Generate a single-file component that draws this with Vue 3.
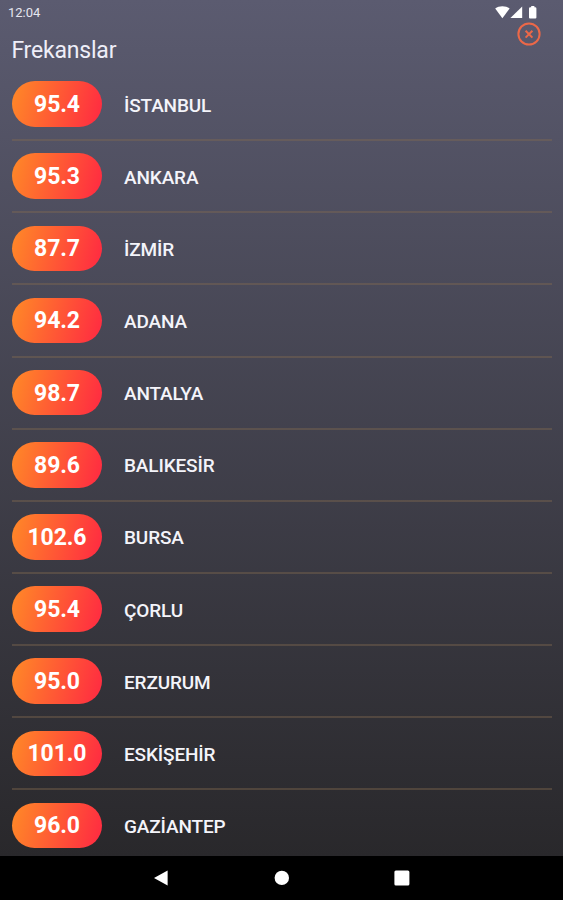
<!-- Frequencies.vue -->
<template>
  <div class="screen">
    <div class="status-bar">
      <span class="clock">12:04</span>
      <svg class="status-icons" viewBox="0 0 43 14" width="43" height="14">
        <!-- wifi -->
        <path d="M0.2 2.6 C4 -0.6 10.8 -0.6 14.6 2.6 L7.4 12.2 Z" />
        <!-- signal -->
        <path d="M27.2 0.4 V12 H15.4 Z" />
        <!-- battery -->
        <path d="M35.3 1.2 H36.2 V0 H39.4 V1.2 H40.2 Q41.4 1.2 41.4 2.4 V11.4 Q41.4 12.4 40.4 12.4 H35 Q34 12.4 34 11.4 V2.4 Q34 1.2 35.3 1.2 Z" />
      </svg>
    </div>

    <header class="header">
      <h1 class="title">Frekanslar</h1>
      <button class="close-button" aria-label="Kapat">
        <svg viewBox="0 0 24 24" width="24" height="24">
          <circle cx="12" cy="12" r="10.6" />
          <path d="M8.6 8.8 L15.4 15.6 M15.4 8.8 L8.6 15.6" />
        </svg>
      </button>
    </header>

    <ul class="station-list">
      <li v-for="station in stations" :key="station.city" class="station">
        <span class="frequency">{{ station.frequency }}</span>
        <span class="city">{{ station.city }}</span>
      </li>
    </ul>

    <nav class="nav-bar">
      <svg viewBox="0 0 16 16" width="16" height="16">
        <path d="M0 8 L13.6 0.4 V15.6 Z" />
      </svg>
      <svg viewBox="0 0 16 16" width="16" height="16">
        <circle cx="7.8" cy="7.9" r="7.2" />
      </svg>
      <svg viewBox="0 0 16 16" width="16" height="16">
        <rect x="0.4" y="0.4" width="15" height="15.2" rx="1.5" />
      </svg>
    </nav>
  </div>
</template>

<script setup>
const stations = [
  { frequency: '95.4', city: 'İSTANBUL' },
  { frequency: '95.3', city: 'ANKARA' },
  { frequency: '87.7', city: 'İZMİR' },
  { frequency: '94.2', city: 'ADANA' },
  { frequency: '98.7', city: 'ANTALYA' },
  { frequency: '89.6', city: 'BALIKESİR' },
  { frequency: '102.6', city: 'BURSA' },
  { frequency: '95.4', city: 'ÇORLU' },
  { frequency: '95.0', city: 'ERZURUM' },
  { frequency: '101.0', city: 'ESKİŞEHİR' },
  { frequency: '96.0', city: 'GAZİANTEP' }
]
</script>

<style>
body {
  margin: 0;
  background: #000;
}
</style>

<style scoped>
.screen {
  display: flex;
  flex-direction: column;
  height: 900px;
  overflow: hidden;
  box-sizing: border-box;
  background: linear-gradient(180deg, #5b5b70 0, #29282b 856px);
  color: #f4f4fa;
  font-family: Roboto, 'Liberation Sans', sans-serif;
}

.status-bar {
  display: flex;
  justify-content: space-between;
  align-items: center;
  flex: none;
  height: 25px;
  padding: 0 25px 0 8px;
}

.clock {
  font-size: 13px;
  color: #e6e6ef;
}

.status-icons {
  fill: #fff;
}

.header {
  display: flex;
  justify-content: space-between;
  align-items: flex-start;
  flex: none;
  height: 44px;
  padding: 0 22px 0 11px;
}

.title {
  margin: 12px 0 0 0.4px;
  font-size: 23px;
  letter-spacing: -0.2px;
  line-height: 28px;
  font-weight: 400;
  color: #eeeef8;
}

.close-button {
  display: flex;
  margin-top: -3px;
  padding: 0;
  border: none;
  background: none;
}

.close-button svg {
  fill: none;
  stroke: #ec6848;
  stroke-width: 2;
}

.station-list {
  flex: 1;
  min-height: 0;
  margin: 0;
  padding: 0 11px 0 12px;
  overflow: hidden;
  list-style: none;
}

.station {
  display: flex;
  align-items: center;
  box-sizing: border-box;
  height: 72.15px;
  border-bottom: 2px solid rgba(132, 108, 80, 0.4);
}

.station:last-child {
  border-bottom-color: transparent;
}

.frequency {
  display: flex;
  justify-content: center;
  align-items: center;
  box-sizing: border-box;
  width: 90px;
  height: 45.5px;
  margin: 0 22px 0 0;
  padding-top: 1px;
  border-radius: 23px;
  background: linear-gradient(105deg, #ff8a27 0%, #ff2f40 93%);
  color: #fff;
  font-size: 23px;
  letter-spacing: -0.1px;
  font-weight: 700;
}

.city {
  margin-top: 2px;
  font-size: 19px;
  letter-spacing: -0.15px;
  font-weight: 500;
}

.nav-bar {
  display: flex;
  justify-content: center;
  align-items: center;
  flex: none;
  gap: 104px;
  height: 44px;
  background: #000;
}

.nav-bar svg {
  fill: #fff;
}
</style>
